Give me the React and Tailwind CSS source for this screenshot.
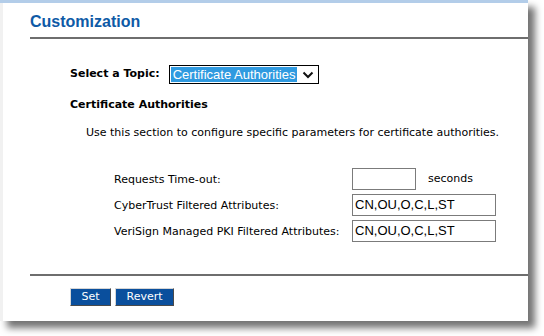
import React from 'react';

const verdana = { fontFamily: '"DejaVu Sans", Verdana, sans-serif' };

const TextBox = ({ value, width }) => (
  <div
    className={`${width} h-[22px] border border-[#7b7b7b] bg-white flex items-center pl-[2px] text-[13px] text-black font-['Liberation_Sans',Arial,sans-serif]`}
  >
    {value}
  </div>
);

const Button = ({ children, width }) => (
  <div
    className={`${width} h-[18px] bg-[#0a4f9d] border border-t-[#d6d6d6] border-l-[#d6d6d6] border-r-[#4a4a4a] border-b-[#4a4a4a] text-white text-[11px] flex items-center justify-center font-['DejaVu_Sans',Verdana,sans-serif]`}
  >
    {children}
  </div>
);

export default function App() {
  const rows = [
    { label: 'Requests Time-out:', field: <><TextBox value="" width="w-[64px]" /><span className="ml-[12px]">seconds</span></> },
    { label: 'CyberTrust Filtered Attributes:', field: <TextBox value="CN,OU,O,C,L,ST" width="w-[144px]" /> },
    { label: 'VeriSign Managed PKI Filtered Attributes:', field: <TextBox value="CN,OU,O,C,L,ST" width="w-[144px]" /> },
  ];

  return (
    <div className="w-[544px] h-[336px] bg-white overflow-hidden text-[11px] text-black" style={verdana}>
      <div className="w-[528px] h-[321px] bg-white flex flex-col shadow-[7px_7px_7px_rgba(0,0,0,0.55)]">
        <div className="h-[3px] bg-[#b3cde9]" />
        <div className="flex-1 border-l-[3px] border-[#f1f1f1] pl-[27px]">
          <h1 className="mt-[10px] h-[18px] leading-[18px] text-[16px] font-bold text-[#0e5aa6] font-['Liberation_Sans',Arial,sans-serif]">
            Customization
          </h1>
          <div className="mt-[6px] h-[2px] bg-[#6e6e6e]" />

          <div className="pl-[40px]">
            <div className="mt-[26px] flex items-center h-[19px]">
              <span className="font-bold">Select a Topic:</span>
              <div className="ml-[9px] w-[150px] h-[19px] border border-black flex items-center pl-[1px] pr-[4px]">
                <span className="bg-[#2f9ae0] text-white text-[13px] leading-[15px] px-[2px] font-['Liberation_Sans',Arial,sans-serif]">
                  Certificate Authorities
                </span>
                <svg className="ml-auto" width="12" height="8" viewBox="0 0 12 8">
                  <path d="M1.5 1.5 L6 6 L10.5 1.5" fill="none" stroke="#111" strokeWidth="2" />
                </svg>
              </div>
            </div>

            <div className="mt-[14px] font-bold leading-[14px]">Certificate Authorities</div>

            <div className="mt-[14px] pl-[16px] leading-[14px]">
              Use this section to configure specific parameters for certificate authorities.
            </div>

            <div className="mt-[28px] pl-[44px] flex flex-col gap-[4px]">
              {rows.map((r) => (
                <div key={r.label} className="flex items-center h-[22px]">
                  <span className="w-[238px] pt-[2px]">{r.label}</span>
                  {r.field}
                </div>
              ))}
            </div>
          </div>

          <div className="mt-[32px] h-[2px] bg-[#6e6e6e]" />

          <div className="pl-[40px] mt-[12px] flex gap-[4px]">
            <Button width="w-[41px]">Set</Button>
            <Button width="w-[59px]">Revert</Button>
          </div>
        </div>
      </div>
    </div>
  );
}
